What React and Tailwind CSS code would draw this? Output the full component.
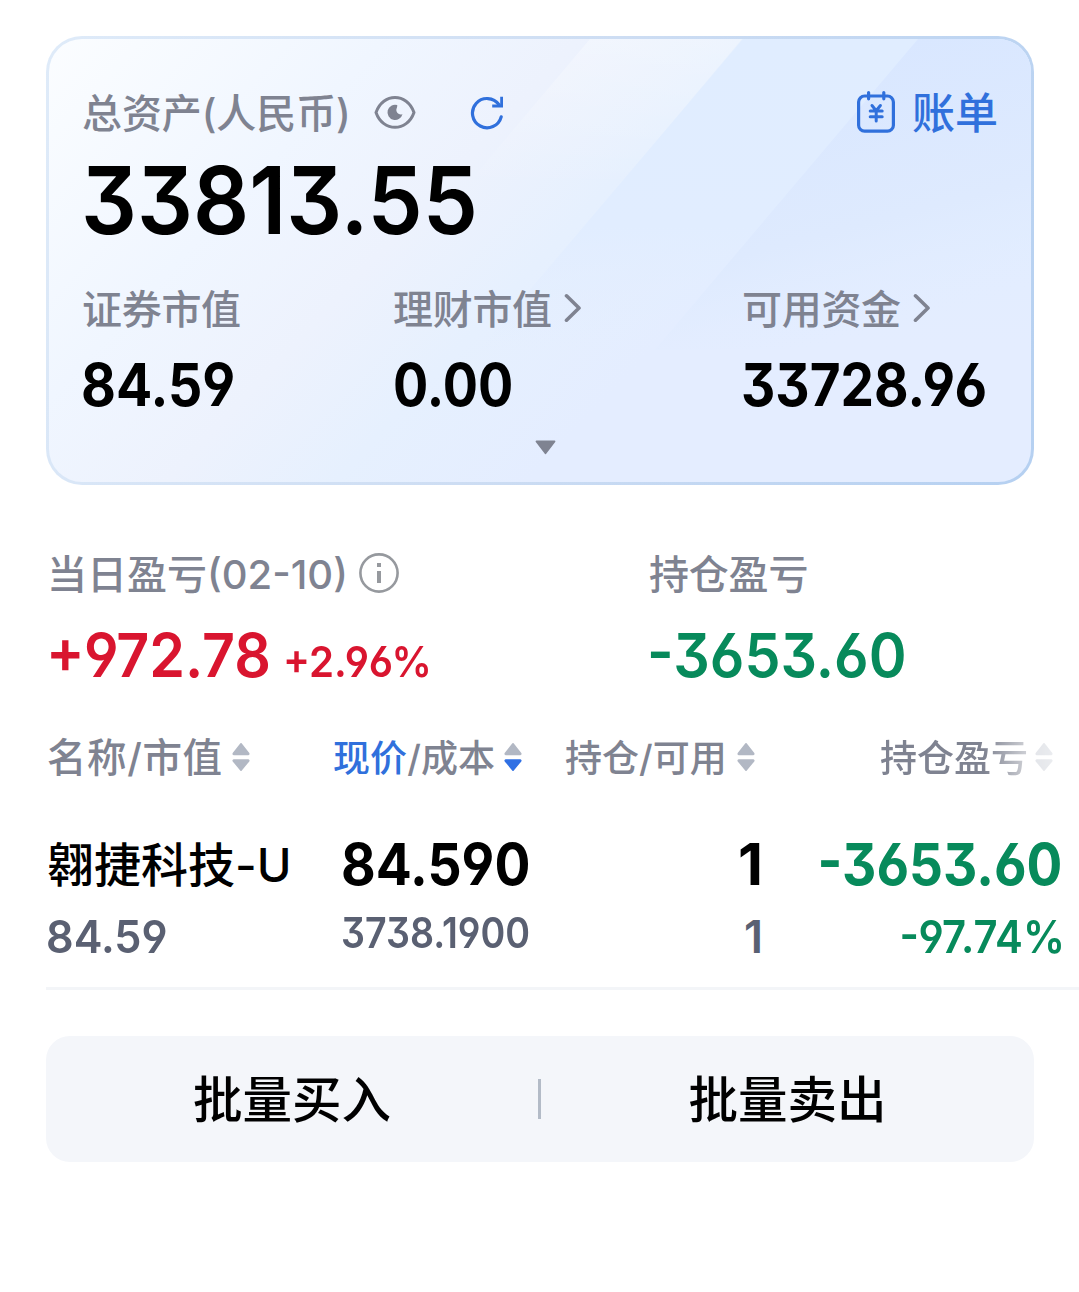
const Num = ({ className = "", children }) => (
  <span className={`inline-block whitespace-nowrap ${className}`}>{children}</span>
);

const Label = ({ className = "", children }) => (
  <span className={`mt-[3px] whitespace-nowrap ${className}`}>{children}</span>
);

const Chevron = () => (
  <svg className="h-[30px] w-[18px] shrink-0" viewBox="0 0 18 30" fill="none" stroke="#7f8391" strokeWidth="3.6" strokeLinecap="round" strokeLinejoin="round">
    <path d="M2.5 2.800 15 15 2.500 27.200" />
  </svg>
);

const Sort = ({ down = "#b2b8c4" }) => (
  <svg className="h-[30px] w-[18px] shrink-0" viewBox="0 0 18 30" strokeWidth="1.6" strokeLinejoin="round">
    <path d="M9 1.800 1.300 11.600a.6.6 0 0 0 .5.9h14.400a.6.6 0 0 0 .5-.9Z" fill="#b2b8c4" stroke="#b2b8c4" />
    <path d="M9 28.200 1.300 18.900a.6.6 0 0 1 .5-.9h14.400a.6.6 0 0 1 .5.9Z" fill={down} stroke={down} />
  </svg>
);

const EyeIcon = () => (
  <svg className="h-[36px] w-[42px]" viewBox="0 0 42 36" fill="none">
    <path d="M2 18.500C5.500 8.500 13.200 3.500 21 3.500S36.500 8.500 40 18.500C36.500 28.500 28.800 33.300 21 33.300S5.500 28.500 2 18.500Z" stroke="#7f8391" strokeWidth="3" strokeLinejoin="round" />
    <path d="M23.200 11a7.600 7.600 0 1 0 5.300 8.900c-1.600.9-3.700.6-5-.9-1.300-1.400-1.500-3.400-.7-5 .3-.9.600-1.800.4-3Z" fill="#7f8391" />
  </svg>
);

const RefreshIcon = () => (
  <svg className="h-[36px] w-[36px]" viewBox="0 0 36 36" fill="none" stroke="#3070dc" strokeWidth="3.2" strokeLinecap="round">
    <path d="M32.200 22.800A14.600 14.600 0 1 1 30 10.700" />
    <path d="M32.600 4.200v7.800h-8" strokeLinecap="square" strokeWidth="2.800" />
  </svg>
);

const BillIcon = () => (
  <svg className="h-[44px] w-[40px]" viewBox="0 0 40 44" fill="none" stroke="#3070dc" strokeWidth="3.2" strokeLinecap="round" strokeLinejoin="round">
    <rect x="2.600" y="6" width="34.800" height="35.200" rx="6" />
    <path d="M12.600 2.600v6.200M27.800 2.600v6.200" />
    <path d="m16 15.500 4.200 5.200 4.200-5.200M20.200 21v10M14.200 21h12M14.200 26.800h12" strokeWidth="3" />
  </svg>
);

const InfoIcon = () => (
  <svg className="h-[40px] w-[40px] shrink-0" viewBox="0 0 40 40" fill="none">
    <circle cx="20" cy="20" r="18.600" stroke="#96999e" strokeWidth="2.600" />
    <path d="M18 10h4v4h-4zM18 18h4v12h-4z" fill="#96999e" />
  </svg>
);

const CardBands = () => (
  <svg className="absolute inset-0 h-full w-full" viewBox="0 0 982 442" preserveAspectRatio="none">
    <defs>
      <linearGradient id="soft" x1="0" y1="0" x2="0" y2="1">
        <stop offset="0" stopColor="#fff" stopOpacity=".3" />
        <stop offset="1" stopColor="#fff" stopOpacity="0" />
      </linearGradient>
      <linearGradient id="band" gradientUnits="userSpaceOnUse" x1="0" y1="0" x2="0" y2="310">
        <stop offset="0" stopColor="#e0edff" />
        <stop offset=".6" stopColor="#e1edff" />
        <stop offset="1" stopColor="#e3edff" stopOpacity="0" />
      </linearGradient>
      <linearGradient id="deep" gradientUnits="userSpaceOnUse" x1="860" y1="0" x2="930" y2="270">
        <stop offset="0" stopColor="#d9e7ff" />
        <stop offset=".6" stopColor="#deeafe" />
        <stop offset="1" stopColor="#e3edff" stopOpacity="0" />
      </linearGradient>
    </defs>
    <path d="M541 0h152L567 150H414Z" fill="url(#soft)" />
    <path d="M694 0h288v310H430Z" fill="url(#band)" />
    <path d="M869 0h113v310H606Z" fill="url(#deep)" />
  </svg>
);

const label = "text-[40px] font-medium text-[#7f8391]";

export default function App() {
  return (
    <main
      className="h-[1292px] w-[1079px] overflow-hidden bg-white pt-9 leading-none text-black [font-family:Inter,'Noto_Sans_CJK_SC',sans-serif] [font-feature-settings:'cv03','cv04','cv09']"
    >
      <section className="ml-[46px] h-[449px] w-[988px] rounded-[36px] bg-linear-110 from-[#dfebf9] via-[#cdddf3] to-[#b5d0f1] p-[3px]">
        <div className="relative h-full overflow-hidden rounded-[33px] bg-[linear-gradient(133deg,#fbfdff_0%,#f0f6ff_24%,#edf2fd_38%,#e6f0fe_50%,#e4edff_64%,#e4edff_100%)]">
          <CardBands />
          <div className="relative px-[33px] pt-[47px]">
            <div className="flex h-[52px] items-center">
              <Label className={`tracking-[-.1px] ${label}`}>总资产(人民币)</Label>
              <span className="ml-[23px]"><EyeIcon /></span>
              <span className="ml-[53px]"><RefreshIcon /></span>
              <span className="ml-auto flex items-center gap-4 text-[43px] font-medium text-[#3070dc]">
                <BillIcon />
                <Label>账单</Label>
              </span>
            </div>
            <div className="mt-[12px] flex h-[100px] items-center">
              <Num className="-ml-px origin-left scale-x-[.934] text-[94px] font-semibold">33813.55</Num>
            </div>
            <div className="mt-[34px] grid grid-cols-[311px_349px_1fr]">
              <div>
                <div className={`flex h-12 items-center ${label}`}><Label className="tracking-[-.3px]">证券市值</Label></div>
                <div className="mt-[22px] flex h-[60px] items-center text-[59px] font-bold">
                  <Num className="-ml-px origin-left scale-x-[.91]">84.59</Num>
                </div>
              </div>
              <div>
                <div className={`flex h-12 items-center gap-3 ${label}`}><Label className="tracking-[-.3px]">理财市值</Label><Chevron /></div>
                <div className="mt-[22px] flex h-[60px] items-center text-[59px] font-bold">
                  <Num className="origin-left scale-x-[.887]">0.00</Num>
                </div>
              </div>
              <div>
                <div className={`flex h-12 items-center gap-3 ${label}`}><Label className="tracking-[-.3px]">可用资金</Label><Chevron /></div>
                <div className="mt-[22px] flex h-[60px] items-center text-[59px] font-bold">
                  <Num className="-ml-px origin-left scale-x-[.9]">33728.96</Num>
                </div>
              </div>
            </div>
            <svg className="ml-[453px] mt-[26px] h-[15px] w-[21px]" viewBox="0 0 21 15">
              <path d="M1.500 1.500h18L10.500 13.300Z" fill="#7f8391" stroke="#7f8391" strokeWidth="1.800" strokeLinejoin="round" />
            </svg>
          </div>
        </div>
      </section>

      <section className="ml-[47px] mt-16 grid grid-cols-[602px_1fr]">
        <div>
          <div className={`flex h-12 items-center gap-[11px] ${label}`}>
            <Label className="-mt-px">当日盈亏(02-10)</Label>
            <InfoIcon />
          </div>
          <div className="mt-[28px] flex h-[60px] items-center font-semibold text-[#d9152f]">
            <Num className="-ml-px w-[237px] origin-left scale-x-[.94] text-[61px]">+972.78</Num>
            <Num className="mt-3 origin-left scale-x-[.935] text-[43px]">+2.96%</Num>
          </div>
        </div>
        <div>
          <div className={`flex h-12 items-center ${label}`}><Label className="tracking-[-.2px]">持仓盈亏</Label></div>
          <div className="mt-[28px] flex h-[60px] items-center text-[61px] font-semibold text-[#078a5b]">
            <Num className="-ml-[2px] origin-left scale-x-[.94]">-3653.60</Num>
          </div>
        </div>
      </section>

      <section className="ml-[47px] mt-12">
        <div className="flex h-12 items-center text-[37px] font-medium text-[#7f8391]">
          <div className="flex w-[286px] items-center gap-[9px] text-[39.500px]"><Label className="tracking-[.6px]">名称/市值</Label><Sort /></div>
          <div className="flex w-[232px] items-center gap-[9px]">
            <Label className="tracking-[.1px]"><span className="text-[#3070dc]">现价</span>/成本</Label>
            <Sort down="#3070e4" />
          </div>
          <div className="flex w-[315px] items-center gap-[10px]"><Label>持仓/可用</Label><Sort /></div>
          <div className="flex items-center gap-[7px] [mask-image:linear-gradient(to_right,#000_60%,#0006_84%,#0004_100%)]"><Label>持仓盈亏</Label><Sort /></div>
        </div>

        <div className="mt-[53px] grid grid-cols-[294px_190px_232px_299px]">
          <div>
            <div className="flex h-[60px] items-center text-[47px] font-medium"><Num>翱捷科技-U</Num></div>
            <div className="mt-[17px] flex h-[50px] items-center text-[45px] font-semibold text-[#5a6072]">
              <Num className="-ml-px origin-left scale-x-[.96]">84.59</Num>
            </div>
          </div>
          <div>
            <div className="flex h-[60px] items-center text-[58px] font-bold">
              <Num className="origin-left scale-x-[.92]">84.590</Num>
            </div>
            <div className="mt-[14px] flex h-[50px] items-center text-[42px] font-semibold text-[#5a6072]">
              <Num className="origin-left scale-x-[.895]">3738.1900</Num>
            </div>
          </div>
          <div>
            <div className="flex h-[60px] items-center justify-end text-[58px] font-bold">1</div>
            <div className="mt-[17px] flex h-[50px] items-center justify-end text-[45px] font-semibold text-[#5a6072]">1</div>
          </div>
          <div className="text-[#078a5b]">
            <div className="flex h-[60px] items-center justify-end text-[58px] font-bold">
              <Num className="origin-right scale-x-[.916]">-3653.60</Num>
            </div>
            <div className="-mr-[3px] mt-[17px] flex h-[50px] items-center justify-end text-[45px] font-semibold">
              <Num className="origin-right scale-x-[.93]">-97.74%</Num>
            </div>
          </div>
        </div>
      </section>

      <div className="ml-[46px] mt-[26px] h-[3px] bg-[#f3f5f8]" />

      <div className="ml-[46px] mt-[46px] grid h-[126px] w-[988px] grid-cols-[492px_3px_1fr] items-center rounded-3xl bg-[#f4f6fa] text-center text-[49.500px] font-medium">
        <span className="mt-1">批量买入</span>
        <span className="h-10 bg-[#b3bbc7]" />
        <span className="mt-1">批量卖出</span>
      </div>
    </main>
  );
}
